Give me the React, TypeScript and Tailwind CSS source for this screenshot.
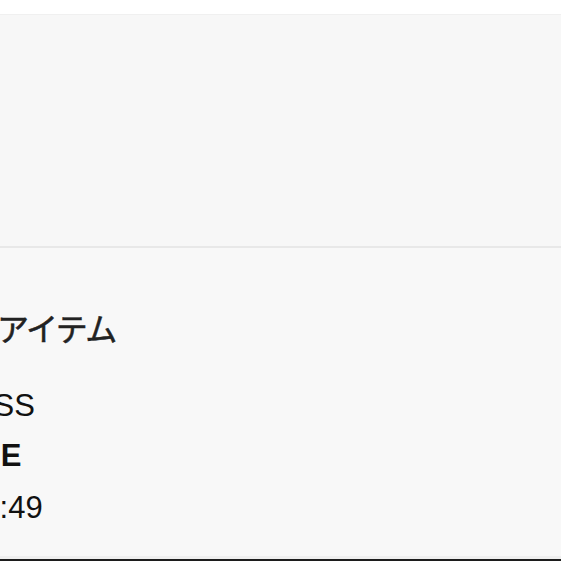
export default function App() {
  return (
    <div className="w-[561px] h-[561px] overflow-hidden bg-[#f8f8f8] flex flex-col">
      <div className="h-[14px] bg-white shrink-0" />
      <div className="h-[232px] shrink-0 bg-[#f7f7f7] border-t border-[#f0f0f0]" />
      <div className="h-[2px] shrink-0 bg-[#e8e8e8]" />
      <div className="flex-1 flex flex-col overflow-hidden bg-[#f8f8f8]">
        <div
          className="mt-[61px] text-[32px] leading-[36px] font-normal text-[#222222] tracking-[-1.5px] whitespace-nowrap -ml-[3px] [-webkit-text-stroke:0.5px_#222222]"
          style={{ fontFamily: '"Noto Sans CJK JP", "Noto Sans", sans-serif' }}
        >
          アイテム
        </div>
        <div
          className="mt-[43px] flex flex-col text-[31px] leading-[36px] text-[#111111] whitespace-nowrap"
          style={{ fontFamily: '"Liberation Sans", Arial, sans-serif' }}
        >
          <div className="-ml-[115px]">SUCCESS</div>
          <div className="mt-[14px] font-bold -ml-[63px]">TRUE</div>
          <div className="mt-[16px] -ml-[78px]">12:34:49</div>
        </div>
        <div className="flex-1" />
        <div className="h-[3px] bg-[#efefef] shrink-0" />
        <div className="h-[2px] bg-[#1c1c1c] shrink-0" />
      </div>
    </div>
  );
}
